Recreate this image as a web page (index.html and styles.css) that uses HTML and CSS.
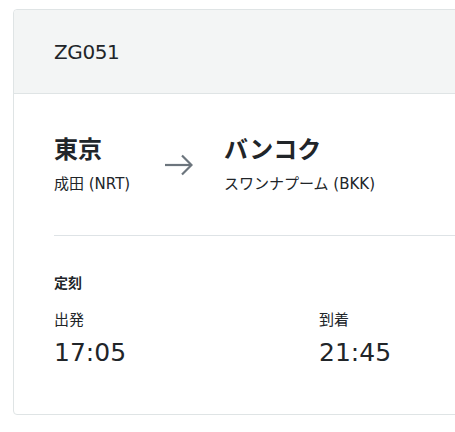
FILE: index.html
```html
<!DOCTYPE html>
<html lang="ja">
<head>
  <meta charset="UTF-8">
  <meta name="viewport" content="width=device-width, initial-scale=1.0">
  <title>ZG051</title>
  <link rel="stylesheet" href="styles.css">
</head>
<body>
  <div class="card">
    <!-- Flight number -->
    <div class="card-header">ZG051</div>

    <div class="card-body">
      <!-- Route -->
      <div class="route">
        <div class="place">
          <div class="city">東京</div>
          <div class="airport">成田 (NRT)</div>
        </div>
        <div class="arrow">
          <svg width="28" height="22" viewBox="0 0 28 22" fill="none" stroke="#6c757d" stroke-width="2.2">
            <path d="M0 11H26"/>
            <path d="M17 1.5L26.5 11L17 20.5"/>
          </svg>
        </div>
        <div class="place">
          <div class="city">バンコク</div>
          <div class="airport">スワンナプーム (BKK)</div>
        </div>
      </div>

      <!-- Schedule -->
      <div class="schedule">
        <div class="schedule-title">定刻</div>
        <div class="times">
          <div class="time-col">
            <div class="time-label">出発</div>
            <div class="time">17:05</div>
          </div>
          <div class="time-col">
            <div class="time-label">到着</div>
            <div class="time">21:45</div>
          </div>
        </div>
      </div>
    </div>
  </div>
</body>
</html>
```

FILE: styles.css
```css
/* General Styles */
body {
  font-family: "DejaVu Sans", "Noto Sans CJK JP", sans-serif;
  color: #212529;
  margin: 0;
  padding: 9px 0 0 13px;
  overflow: hidden;
  background: #fff;
}
.card {
  width: 600px;
  border: 1px solid #dfe4e5;
  border-radius: 4px;
  background: #fff;
}
.card-header {
  height: 83px;
  display: flex;
  align-items: center;
  padding: 0 40px;
  background: #f3f5f5;
  border-bottom: 1px solid #dfe4e5;
  border-radius: 4px 4px 0 0;
  font-size: 20px;
  letter-spacing: -0.4px;
}
.card-body {
  padding: 40px 0 45px 40px;
}
/* Route */
.route {
  display: flex;
  align-items: flex-start;
  padding-bottom: 41px;
  border-bottom: 1px solid #dee3e6;
}
.place:first-child {
  width: 111px;
  flex-shrink: 0;
}
.city {
  font-size: 24px;
  line-height: 32px;
  font-weight: bold;
}
.airport {
  font-size: 15px;
  line-height: 20px;
  margin-top: 8px;
}
.arrow {
  width: 59px;
  flex-shrink: 0;
  padding-top: 20px;
}
.arrow svg {
  display: block;
}
/* Schedule */
.schedule {
  padding-top: 37px;
}
.schedule-title {
  font-size: 14px;
  line-height: 20px;
  font-weight: bold;
}
.times {
  display: flex;
  margin-top: 17px;
}
.time-col {
  width: 265px;
  flex-shrink: 0;
}
.time-label {
  font-size: 15px;
  line-height: 20px;
}
.time {
  font-size: 25px;
  line-height: 32px;
  margin-top: 7px;
}
```
